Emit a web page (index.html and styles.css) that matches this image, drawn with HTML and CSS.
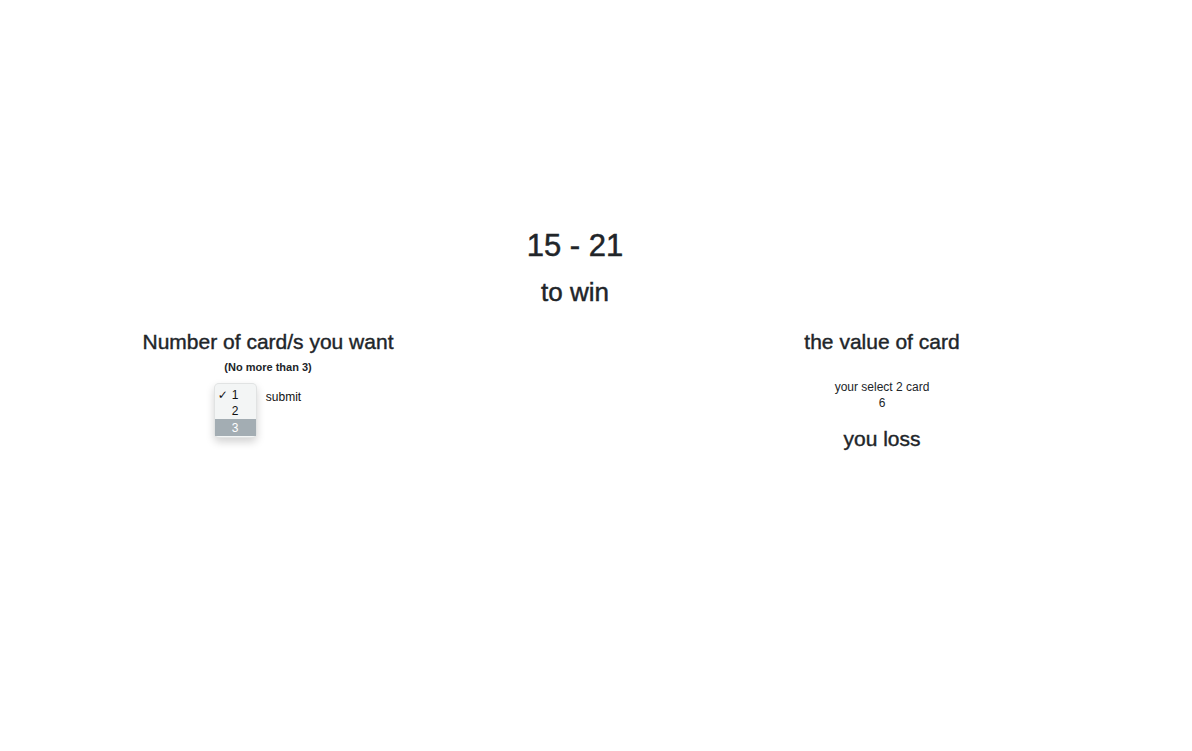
FILE: index.html
```html
<!DOCTYPE html>
<html lang="en">
<head>
<meta charset="utf-8">
<title>15 - 21</title>
<link rel="stylesheet" href="styles.css">
</head>
<body>
<main class="page">
  <h1 class="title">15 - 21</h1>
  <h2 class="subtitle">to win</h2>
  <div class="columns">
    <section class="col">
      <h3 class="heading">Number of card/s you want</h3>
      <h6 class="note">(No more than 3)</h6>
      <div class="controls">
        <div class="select-wrap">
          <ul class="popup">
            <li class="opt"><span class="check">✓</span>1</li>
            <li class="opt"><span class="check"></span>2</li>
            <li class="opt opt-active"><span class="check"></span>3</li>
          </ul>
        </div>
        <button class="submit" type="button">submit</button>
      </div>
    </section>
    <section class="col">
      <h3 class="heading">the value of card</h3>
      <p class="info">your select 2 card</p>
      <p class="info">6</p>
      <h3 class="heading result">you loss</h3>
    </section>
  </div>
</main>
</body>
</html>
```

FILE: styles.css
```css
* { box-sizing: border-box; }

html, body {
  margin: 0;
  padding: 0;
  background: #ffffff;
}

body {
  font-family: "Liberation Sans", Arial, Helvetica, sans-serif;
  color: #212529;
  width: 1192px;
  height: 751px;
  overflow: hidden;
}

.page {
  width: 1150px;
  padding-top: 227px;
  text-align: center;
}

h1, h2, h3, h6, p, ul { margin: 0; padding: 0; }

.title {
  font-size: 31px;
  line-height: 38px;
  font-weight: 400;
  -webkit-text-stroke: 0.5px #212529;
}

.subtitle {
  margin-top: 11px;
  font-size: 26px;
  line-height: 32px;
  font-weight: 400;
  -webkit-text-stroke: 0.45px #212529;
}

.columns {
  margin-top: 21px;
  display: grid;
  grid-template-columns: 536px 536px;
  column-gap: 78px;
}

.col {
  display: flex;
  flex-direction: column;
  align-items: center;
}

.heading {
  font-size: 21px;
  line-height: 26px;
  font-weight: 400;
  -webkit-text-stroke: 0.4px #212529;
}

.note {
  margin-top: 5px;
  font-size: 11px;
  line-height: 14px;
  font-weight: 700;
}

.controls {
  margin-top: 9px;
  display: flex;
  align-items: flex-start;
  justify-content: center;
  gap: 9px;
  padding-right: 21px;
}

.select-wrap {
  width: 43px;
  height: 55px;
}

.popup {
  list-style: none;
  width: 43px;
  padding: 3px 0 1px 0;
  background: #f3f5f5;
  border: 1px solid rgba(0, 0, 0, 0.07);
  border-radius: 5px;
  box-shadow: 0 4px 9px rgba(0, 0, 0, 0.18);
  text-align: left;
}

.opt {
  display: flex;
  align-items: center;
  height: 16px;
  padding-left: 3px;
  font-size: 12px;
  line-height: 16px;
  color: #111111;
}

.opt-active {
  background: #a3adb3;
  color: #ffffff;
  height: 17px;
}

.check {
  display: inline-block;
  width: 14px;
  font-family: "DejaVu Sans", sans-serif;
  font-size: 12px;
  font-weight: 700;
}

.submit {
  margin-top: 7px;
  padding: 0;
  border: 0;
  background: transparent;
  font-family: "Liberation Sans", Arial, sans-serif;
  font-size: 12px;
  line-height: 14px;
  color: #111111;
}

.info {
  font-size: 12px;
  line-height: 16px;
}

.heading + .info {
  margin-top: 24px;
}

.result {
  margin-top: 15px;
}
```
